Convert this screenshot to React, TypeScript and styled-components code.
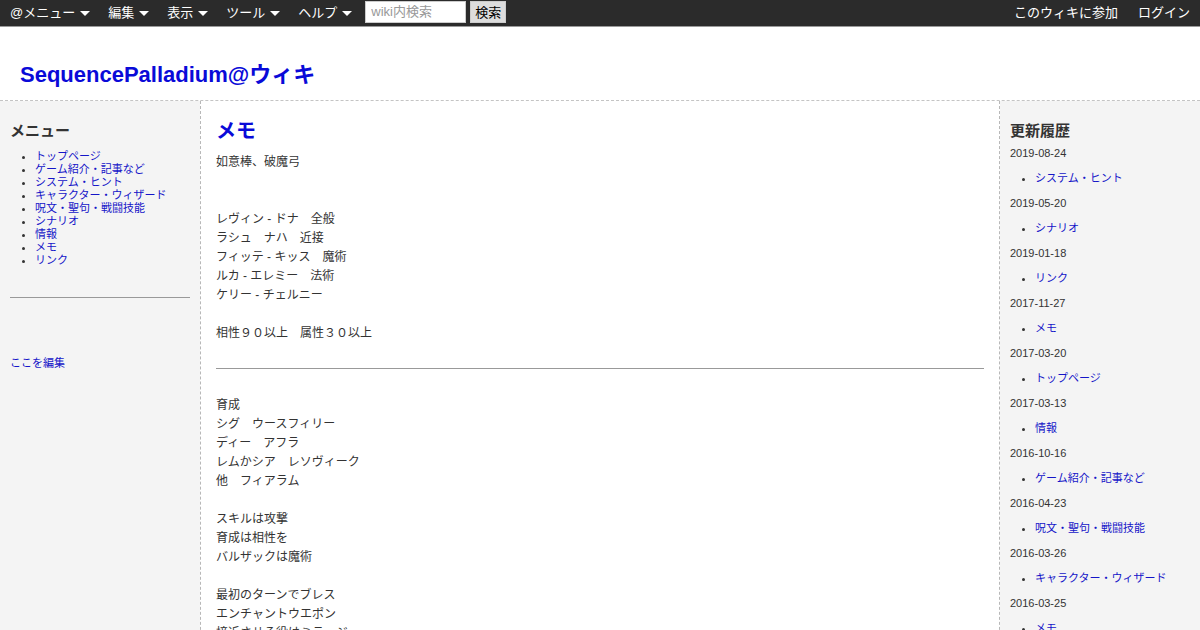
import React from "react";
import styled, { createGlobalStyle } from "styled-components";

const Global = createGlobalStyle`
  html, body { margin: 0; padding: 0; background: #fff; }
  body { font-family: "Liberation Sans", "Noto Sans CJK JP", sans-serif; color: #333; }
  * { box-sizing: border-box; }
  a { color: #1515c8; text-decoration: none; }
`;

const TopBar = styled.div`
  height: 27px;
  background: #2b2b2b;
  border-bottom: 1px solid #9a9a9a;
  display: flex;
  align-items: center;
  justify-content: space-between;
  padding: 0 10px 3px;
  color: #fff;
  font-size: 13px;
`;

const NavGroup = styled.div`
  display: flex;
  align-items: center;
`;

const NavItem = styled.span`
  display: flex;
  align-items: center;
  margin-right: 18px;
  white-space: nowrap;
`;

const Caret = styled.span`
  display: inline-block;
  margin-left: 5px;
  margin-top: 3px;
  width: 0;
  height: 0;
  border-left: 5px solid transparent;
  border-right: 5px solid transparent;
  border-top: 5px solid #fff;
`;

const SearchInput = styled.input`
  width: 101px;
  height: 22px;
  margin-left: -5px;
  border: 1px solid #ccc;
  padding: 0 5px;
  font-family: "Liberation Sans", "Noto Sans CJK JP", sans-serif;
  font-size: 13px;
  color: #333;
  &::placeholder { color: #999; }
`;

const SearchButton = styled.button`
  height: 22px;
  margin-left: 4px;
  padding: 0 4px;
  border: 1px solid #ccc;
  background: #ddd;
  color: #000;
  font-family: "Liberation Sans", "Noto Sans CJK JP", sans-serif;
  font-size: 13px;
`;

const RightLink = styled.span`
  margin-left: 20px;
  white-space: nowrap;
`;

const Header = styled.header`
  height: 73px;
  padding: 34px 20px 0;
`;

const SiteTitle = styled.h1`
  margin: 0;
  font-size: 22px;
  line-height: 28px;
  font-weight: bold;
  color: #0a0ad8;
`;

const Columns = styled.div`
  display: grid;
  grid-template-columns: 200px 1fr 200px;
  border-top: 1px dashed #c4c4c4;
  min-height: 600px;
`;

const Side = styled.aside`
  background: #f4f4f4;
  padding: 10px;
`;

const Main = styled.main`
  border-left: 1px dashed #b8b8b8;
  border-right: 1px dashed #b8b8b8;
  padding: 15px 15px;
`;

const SideHeading = styled.h3`
  margin: 10px 0 0;
  font-size: 15px;
  line-height: 20px;
  font-weight: bold;
  color: #333;
`;

const MenuList = styled.ul`
  margin: 9px 0 0;
  padding-left: 25px;
  font-size: 11px;
  line-height: 13px;
`;

const Rule = styled.hr<{ $top: number; $bottom: number }>`
  border: 0;
  border-top: 1px solid #999;
  margin: ${(p) => p.$top}px 0 ${(p) => p.$bottom}px;
`;

const SmallLink = styled.a`
  display: block;
  font-size: 11px;
  line-height: 13px;
`;

const PageTitle = styled.h2`
  margin: 2px 0 9px;
  font-size: 20px;
  line-height: 26px;
  font-weight: bold;
  color: #0a0ad8;
`;

const Body = styled.div`
  font-size: 12px;
  line-height: 19px;
  color: #333;
`;

const Line = styled.div`
  min-height: 19px;
  white-space: pre;
`;

const DateLine = styled.div`
  font-size: 11px;
  line-height: 25px;
  color: #333;
`;

const HistoryList = styled.ul`
  margin: 0;
  padding-left: 25px;
  font-size: 11px;
  line-height: 25px;
`;

const menu = [
  "トップページ",
  "ゲーム紹介・記事など",
  "システム・ヒント",
  "キャラクター・ウィザード",
  "呪文・聖句・戦闘技能",
  "シナリオ",
  "情報",
  "メモ",
  "リンク",
];

const part1 = [
  "如意棒、破魔弓",
  "",
  "",
  "レヴィン - ドナ　全般",
  "ラシュ　ナハ　近接",
  "フィッテ - キッス　魔術",
  "ルカ - エレミー　法術",
  "ケリー - チェルニー",
  "",
  "相性９０以上　属性３０以上",
];

const part2 = [
  "育成",
  "シグ　ウースフィリー",
  "ディー　アフラ",
  "レムかシア　レソヴィーク",
  "他　フィアラム",
  "",
  "スキルは攻撃",
  "育成は相性を",
  "バルザックは魔術",
  "",
  "最初のターンでブレス",
  "エンチャントウエポン",
  "接近させる役はミラージュ",
  "",
  "",
];

const history: [string, string][] = [
  ["2019-08-24", "システム・ヒント"],
  ["2019-05-20", "シナリオ"],
  ["2019-01-18", "リンク"],
  ["2017-11-27", "メモ"],
  ["2017-03-20", "トップページ"],
  ["2017-03-13", "情報"],
  ["2016-10-16", "ゲーム紹介・記事など"],
  ["2016-04-23", "呪文・聖句・戦闘技能"],
  ["2016-03-26", "キャラクター・ウィザード"],
  ["2016-03-25", "メモ"],
];

export default function App() {
  return (
    <>
      <Global />
      <TopBar>
        <NavGroup>
          {["@メニュー", "編集", "表示", "ツール", "ヘルプ"].map((t) => (
            <NavItem key={t}>
              {t}
              <Caret />
            </NavItem>
          ))}
          <SearchInput placeholder="wiki内検索" />
          <SearchButton>検索</SearchButton>
        </NavGroup>
        <NavGroup>
          <RightLink>このウィキに参加</RightLink>
          <RightLink>ログイン</RightLink>
        </NavGroup>
      </TopBar>
      <Header>
        <SiteTitle>SequencePalladium@ウィキ</SiteTitle>
      </Header>
      <Columns>
        <Side>
          <SideHeading>メニュー</SideHeading>
          <MenuList>
            {menu.map((m) => (
              <li key={m}>
                <a href="#">{m}</a>
              </li>
            ))}
          </MenuList>
          <Rule $top={30} $bottom={59} />
          <SmallLink href="#">ここを編集</SmallLink>
        </Side>
        <Main>
          <PageTitle>メモ</PageTitle>
          <Body>
            {part1.map((l, i) => (
              <Line key={"a" + i}>{l}</Line>
            ))}
            <Rule $top={25} $bottom={27} />
            {part2.map((l, i) => (
              <Line key={"b" + i}>{l}</Line>
            ))}
          </Body>
        </Main>
        <Side>
          <SideHeading>更新履歴</SideHeading>
          {history.map(([d, t], i) => (
            <React.Fragment key={i}>
              <DateLine>{d}</DateLine>
              <HistoryList>
                <li>
                  <a href="#">{t}</a>
                </li>
              </HistoryList>
            </React.Fragment>
          ))}
        </Side>
      </Columns>
    </>
  );
}
